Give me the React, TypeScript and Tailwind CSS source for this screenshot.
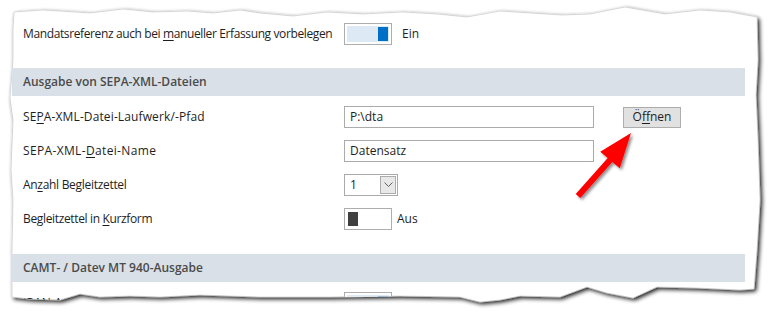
import React from "react";

const PAPER =
  "M14 12 L43 10 L90 13 L123 9 L153 12 L187 11 L213 13 L240 10 L260 13 L293 16 L327 12 L363 14 L403 12 L437 14 L467 17 L500 11 L530 13 L562 15 L590 14 L625 7 L665 14 L700 10 L730 12 L757 17 L758 60 L756 95 L758 140 L760 200 L757 250 L754 289 L740 290 L697 288 L657 287 L633 298 L607 293 L587 287 L560 297 L520 296 L500 300 L480 302 L460 297 L400 296 L330 297 L300 297 L260 297 L200 295 L160 297 L130 296 L100 297 L80 294 L60 300 L30 299 L12 297 L12 250 L13 200 L11 170 L13 120 L10 98 L13 60 L13 30 Z";

function Toggle({ on }: { on: boolean }) {
  return (
    <div className="w-[48px] h-[22px] border border-[#adadad] bg-white p-[2px] flex">
      {on ? (
        <div className="flex-1 flex bg-[#dde9f5]">
          <div className="flex-1" />
          <div className="w-[10px] mr-[1px] my-[1px] bg-[#0070c6]" />
        </div>
      ) : (
        <div className="flex-1 flex">
          <div className="w-[10px] ml-[1px] my-[1px] bg-[#404040]" />
        </div>
      )}
    </div>
  );
}

function Header({ children }: { children: React.ReactNode }) {
  return (
    <div className="h-[28px] bg-[#d9e0e7] flex items-center pl-[11px] font-semibold text-[#4b4b4b] whitespace-nowrap">
      {children}
    </div>
  );
}

function Row({ label, children }: { label: React.ReactNode; children?: React.ReactNode }) {
  return (
    <div className="h-[34px] flex items-center">
      <div className="w-[332px] shrink-0 pl-[11px] whitespace-nowrap">{label}</div>
      {children}
    </div>
  );
}

function TextInput({ value }: { value: string }) {
  return (
    <div className="w-[250px] h-[22px] border border-[#ababab] bg-white flex items-center pl-[5px]">
      {value}
    </div>
  );
}

export default function App() {
  return (
    <div className="relative w-[774px] h-[315px] bg-white overflow-hidden text-[12px] text-[#1e1e1e] font-['Segoe_UI','Open_Sans',sans-serif]">
      <svg className="absolute inset-0" width="774" height="315">
        <defs>
          <filter id="sh" x="-5%" y="-5%" width="110%" height="115%">
            <feGaussianBlur in="SourceAlpha" stdDeviation="2" />
            <feOffset dx="2" dy="2" result="b" />
            <feComponentTransfer>
              <feFuncA type="linear" slope="0.9" />
            </feComponentTransfer>
            <feMerge>
              <feMergeNode />
              <feMergeNode in="SourceGraphic" />
            </feMerge>
          </filter>
          <clipPath id="paperClip" clipPathUnits="userSpaceOnUse">
            <path d={PAPER} />
          </clipPath>
        </defs>
        <path d={PAPER} fill="#fff" stroke="#c4c4c4" strokeWidth="0.6" filter="url(#sh)" />
      </svg>

      <div className="relative [clip-path:url(#paperClip)] w-[774px] h-[315px]">
        <div className="ml-[12px] w-[733px] pt-[17px] flex flex-col">
          <Row
            label={
              <span className="tracking-[-0.38px]">
                Mandatsreferenz auch bei <u className="underline-offset-2">m</u>anueller Erfassung vorbelegen
              </span>
            }
          >
            <Toggle on />
            <span className="ml-[10px]">Ein</span>
          </Row>

          <div className="mt-[17px]">
            <Header>Ausgabe von SEPA-XML-Dateien</Header>
          </div>

          <div className="mt-[4px]">
            <Row
              label={
                <span className="tracking-[0.12px]">
                  SE<u className="underline-offset-2">P</u>A-XML-Datei-Laufwerk/-Pfad
                </span>
              }
            >
              <TextInput value="P:\dta" />
              <button className="ml-[29px] w-[58px] h-[21px] border border-[#adadad] bg-[#e1e1e1] flex items-center justify-center">
                <span>
                  Ö<u className="underline-offset-2">f</u>fnen
                </span>
              </button>
            </Row>
            <Row
              label={
                <span className="tracking-[0.35px]">
                  SEPA-XML-<u className="underline-offset-2">D</u>atei-Name
                </span>
              }
            >
              <TextInput value="Datensatz" />
            </Row>
            <Row
              label={
                <span className="tracking-[-0.3px]">
                  An<u className="underline-offset-2">z</u>ahl Begleitzettel
                </span>
              }
            >
              <div className="w-[54px] h-[22px] border border-[#ababab] bg-white flex items-center pl-[5px] pr-[1px]">
                <span className="flex-1">1</span>
                <div className="w-[16px] h-[18px] border border-[#acacac] bg-[#e8e8e8] flex items-center justify-center">
                  <svg width="9" height="6" viewBox="0 0 9 6">
                    <path d="M0.5 0.5 L4.5 4.5 L8.5 0.5" fill="none" stroke="#606060" strokeWidth="1" />
                  </svg>
                </div>
              </div>
            </Row>
            <Row
              label={
                <span className="tracking-[-0.35px]">
                  Begleitzettel in <u className="underline-offset-2">K</u>urzform
                </span>
              }
            >
              <Toggle on={false} />
              <span className="ml-[5px]">Aus</span>
            </Row>
          </div>

          <div className="mt-[18px]">
            <Header>CAMT- / Datev MT 940-Ausgabe</Header>
          </div>

          <div className="mt-[4px]">
            <Row label={<span>IBAN-Auswahl anzeigen</span>}>
              <Toggle on />
            </Row>
          </div>
        </div>
      </div>

      <svg className="absolute inset-0 pointer-events-none" width="774" height="315">
        <defs>
          <filter id="ash" x="-30%" y="-30%" width="160%" height="160%">
            <feGaussianBlur in="SourceAlpha" stdDeviation="1.8" />
            <feOffset dx="2" dy="2" />
            <feComponentTransfer>
              <feFuncA type="linear" slope="0.45" />
            </feComponentTransfer>
            <feMerge>
              <feMergeNode />
              <feMergeNode in="SourceGraphic" />
            </feMerge>
          </filter>
        </defs>
        <polygon
          points="631,133 600.2,151.7 607.7,158.1 575.7,194.1 580.3,197.9 612.3,161.9 619.8,168.3"
          fill="#ff0000"
          filter="url(#ash)"
        />
      </svg>
    </div>
  );
}
